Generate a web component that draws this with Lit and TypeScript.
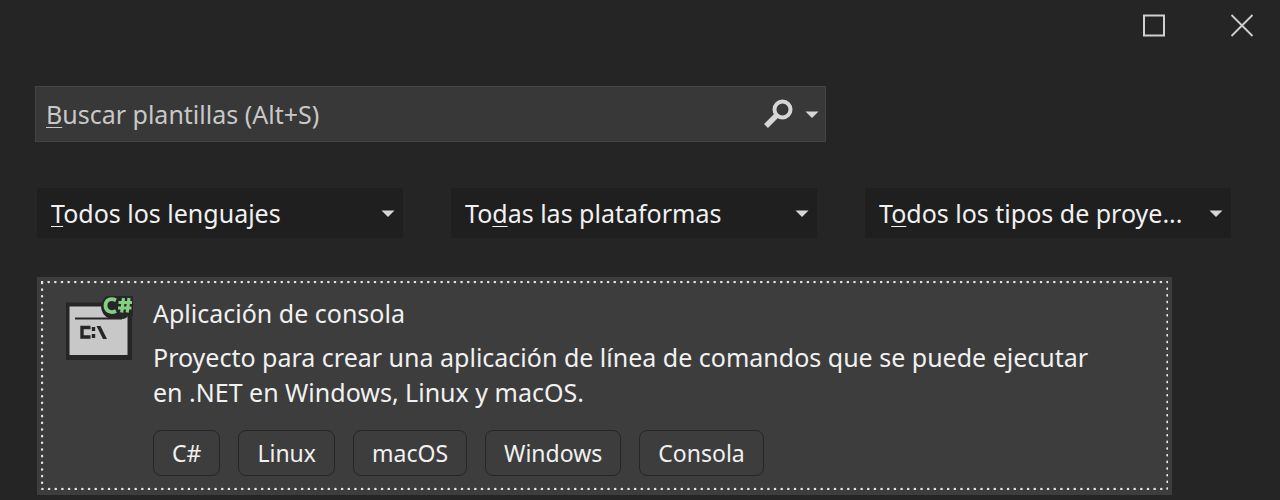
import { LitElement, html, css, svg } from "lit";
import { customElement, property, state } from "lit/decorators.js";
import { classMap } from "lit/directives/class-map.js";

const caret = svg`<path d="M0.500 0.500h13l-6.500 6.500z" fill="currentColor" />`;

@customElement("filter-select")
class FilterSelect extends LitElement {
  static styles = css`
    :host {
      display: block;
      min-width: 0;
    }
    .box {
      display: grid;
      grid-template-columns: minmax(0, 1fr) auto;
      align-items: center;
      height: 50px;
      background: #1f1f1f;
      color: #f1f1f1;
    }
    select {
      grid-area: 1 / 1 / 2 / 3;
      width: 100%;
      height: 100%;
      padding: 0 36px 0 14px;
      border: 0;
      appearance: none;
      background: transparent;
      color: inherit;
      font: inherit;
    }
    option {
      background: #1f1f1f;
    }
    label {
      grid-area: 1 / 1;
      padding-left: 14px;
      white-space: nowrap;
      pointer-events: none;
    }
    .chosen {
      visibility: hidden;
    }
    u {
      text-decoration-thickness: 1px;
      text-underline-offset: 3px;
    }
    .caret {
      grid-area: 1 / 2;
      margin-right: 8px;
      pointer-events: none;
      color: #d6d6d6;
    }
  `;

  @property() before = "";
  @property() key = "";
  @property() after = "";
  @property({ attribute: false }) options: string[] = [];
  @state() private value = "";

  render() {
    return html`
      <div class="box">
        <select
          id="filter"
          @change=${(e: Event) => (this.value = (e.target as HTMLSelectElement).value)}
        >
          <option value=""></option>
          ${this.options.map((o) => html`<option>${o}</option>`)}
        </select>
        <label for="filter" class=${classMap({ chosen: this.value !== "" })}
          >${this.before}<u>${this.key}</u>${this.after}</label
        >
        <svg class="caret" width="14" height="7" viewBox="0 0 14 7" aria-hidden="true">${caret}</svg>
      </div>
    `;
  }
}

@customElement("template-card")
class TemplateCard extends LitElement {
  static styles = css`
    :host {
      display: block;
    }
    .card {
      position: relative;
      display: grid;
      grid-template-columns: 68px minmax(0, 1fr);
      column-gap: 20px;
      padding: 19px 72px 19px 28px;
      background: #3d3d3d;
      color: #f1f1f1;
    }
    .focus {
      position: absolute;
      inset: 4px;
      width: calc(100% - 8px);
      height: calc(100% - 9px);
      pointer-events: none;
    }
    .focus rect {
      x: 1px;
      y: 1px;
      width: calc(100% - 2px);
      height: calc(100% - 2px);
      fill: none;
      stroke: #e4e4e4;
      stroke-width: 2.6;
      stroke-linecap: round;
      stroke-dasharray: 0 6.66;
    }
    h2,
    p {
      margin: 0;
      font-size: 25px;
      font-weight: 400;
      line-height: 35px;
    }
    h2 {
      margin-bottom: 9px;
    }
    .tags {
      display: flex;
      flex-wrap: wrap;
      gap: 18px;
      margin: 20px 0 0;
      padding: 0;
      list-style: none;
    }
    .tags li {
      padding: 0 18px;
      border: 1px solid #262626;
      border-radius: 8px;
      font-size: 23px;
      line-height: 44px;
    }
  `;

  @property() heading = "";
  @property() description = "";
  @property({ attribute: false }) tags: string[] = [];

  render() {
    return html`
      <article class="card" tabindex="0">
        <svg width="68" height="66" viewBox="0 0 68 66" aria-hidden="true">
          <path d="M1 6.500h66v57.500H1z" fill="#262626" />
          <path d="M4.500 10.500h58v48.500h-58z" fill="#c8c8c8" />
          <path d="M10 22.500h47" stroke="#262626" stroke-width="2" />
          <path
            d="M25.500 31.500H17v9.500H25.500M28.500 31v4M28.500 38v4"
            fill="none"
            stroke="#262626"
            stroke-width="3.400"
          />
          <path d="M31.500 30h4l6.500 13h-4z" fill="#262626" />
          <path d="M44-1H69V20H63Q61 23 57 23H45Q36 19 36 10Q37 2 44-1Z" fill="#262626" />
          <path
            d="M51 4.200C45 1.500 40.500 4.500 40.500 9.500s4.500 8.300 10.500 5.500"
            fill="none"
            stroke="#84cf84"
            stroke-width="3.800"
          />
          <path
            d="M58.500 2l-1.800 14.500M64 2l-1.800 14.500M53.500 6.500h13.500M53 12h13.500"
            fill="none"
            stroke="#84cf84"
            stroke-width="3.200"
          />
        </svg>
        <div>
          <h2>${this.heading}</h2>
          <p>${this.description}</p>
          <ul class="tags">
            ${this.tags.map((t) => html`<li>${t}</li>`)}
          </ul>
        </div>
        <svg class="focus" aria-hidden="true"><rect /></svg>
      </article>
    `;
  }
}

@customElement("app-root")
class AppRoot extends LitElement {
  static styles = css`
    :host {
      display: block;
      min-height: 100vh;
      box-sizing: border-box;
      background: #252525;
      color: #f1f1f1;
      font: 25px/36px "Noto Sans", "Open Sans", sans-serif;
    }
    .titlebar {
      display: flex;
      justify-content: flex-end;
      gap: 40px;
      padding: 0 14px 0 0;
      height: 50px;
    }
    .titlebar button {
      display: grid;
      place-items: center;
      width: 48px;
      padding: 0;
      border: 0;
      background: transparent;
      color: #d0d0d0;
    }
    main {
      padding: 36px 49px 5px 37px;
    }
    .search {
      display: grid;
      grid-template-columns: minmax(0, 1fr) auto auto;
      align-items: center;
      box-sizing: border-box;
      width: 66.25%;
      height: 56px;
      margin-left: -2px;
      border: 1px solid #444;
      background: #383838;
      color: #c8c8c8;
    }
    .search input {
      grid-area: 1 / 1;
      width: 100%;
      height: 100%;
      box-sizing: border-box;
      padding: 0 10px;
      border: 0;
      outline: 0;
      background: transparent;
      color: inherit;
      font: inherit;
    }
    .search label {
      grid-area: 1 / 1;
      padding-left: 10px;
      white-space: nowrap;
      pointer-events: none;
    }
    .search input:not(:placeholder-shown) + label {
      visibility: hidden;
    }
    .search button {
      display: grid;
      place-items: center;
      height: 100%;
      padding: 0 6px;
      border: 0;
      background: transparent;
      color: #d6d6d6;
    }
    u {
      text-decoration-thickness: 1px;
      text-underline-offset: 3px;
    }
    .filters {
      display: grid;
      grid-template-columns: repeat(3, minmax(0, 1fr));
      gap: 48px;
      margin: 46px 0 39px;
    }
    template-card {
      width: 95.1%;
    }
  `;

  render() {
    return html`
      <header class="titlebar">
        <button type="button" aria-label="Maximizar">
          <svg width="24" height="24" viewBox="0 0 24 24">
            <path d="M2 2.500h20v20H2z" fill="none" stroke="currentColor" stroke-width="2" />
          </svg>
        </button>
        <button type="button" aria-label="Cerrar">
          <svg width="24" height="24" viewBox="0 0 24 24">
            <path d="M1.500 2l21 21M22.500 2l-21 21" stroke="currentColor" stroke-width="1.800" />
          </svg>
        </button>
      </header>
      <main>
        <form class="search" role="search" @submit=${(e: Event) => e.preventDefault()}>
          <input id="search" type="text" placeholder=" " accesskey="s" />
          <label for="search"><u>B</u>uscar plantillas (Alt+S)</label>
          <button type="submit" aria-label="Buscar">
            <svg width="30" height="30" viewBox="0 0 30 30" fill="none" stroke="currentColor">
              <circle cx="19.500" cy="10.500" r="8" stroke-width="4" />
              <path d="M14 16L3 27" stroke-width="5.500" />
            </svg>
          </button>
          <button type="button" aria-label="Historial">
            <svg width="14" height="7" viewBox="0 0 14 7">${caret}</svg>
          </button>
        </form>
        <section class="filters">
          <filter-select
            key="T"
            after="odos los lenguajes"
            .options=${["C#", "C++", "F#", "Visual Basic"]}
          ></filter-select>
          <filter-select
            before="To"
            key="d"
            after="as las plataformas"
            .options=${["Linux", "macOS", "Windows"]}
          ></filter-select>
          <filter-select
            before="T"
            key="o"
            after="dos los tipos de proye..."
            .options=${["Consola", "Escritorio", "Web"]}
          ></filter-select>
        </section>
        <template-card
          heading="Aplicación de consola"
          description="Proyecto para crear una aplicación de línea de comandos que se puede ejecutar en .NET en Windows, Linux y macOS."
          .tags=${["C#", "Linux", "macOS", "Windows", "Consola"]}
        ></template-card>
      </main>
    `;
  }
}
